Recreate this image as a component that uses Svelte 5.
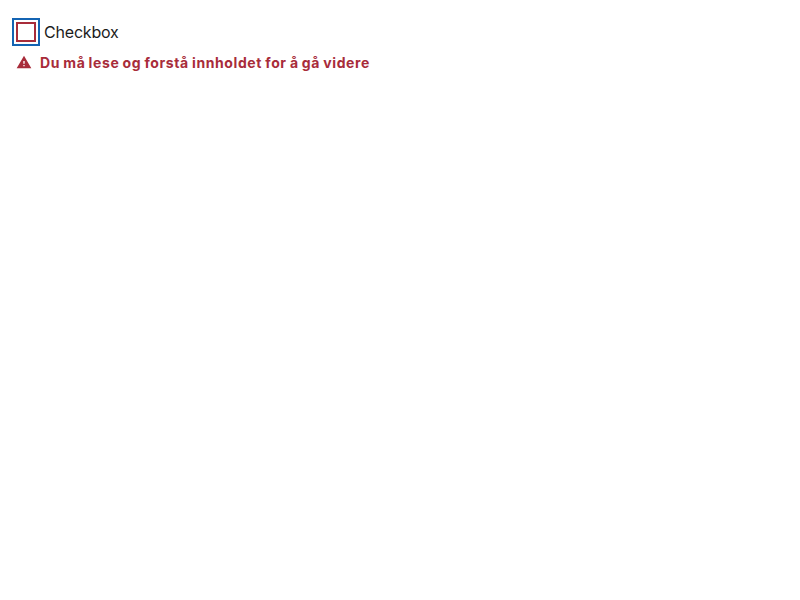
<script>
  let checked = $state(false);
</script>

<div class="field">
  <label class="row">
    <input type="checkbox" bind:checked />
    <span class="box"></span>
    <span class="text">Checkbox</span>
  </label>
  <div class="error">
    <svg viewBox="0 0 24 24" width="16" height="16" aria-hidden="true">
      <path fill="currentColor" fill-rule="evenodd" d="M1 21.5h22L12 2.5 1 21.5Zm12-3h-2v-2h2v2Zm0-4h-2v-4h2v4Z" />
    </svg>
    <span>Du må lese og forstå innholdet for å gå videre</span>
  </div>
</div>

<style>
  :global(body) {
    background: #fff;
  }
  .field {
    padding: 20px 16px;
    font-family: Inter, "Liberation Sans", sans-serif;
  }
  .row {
    display: flex;
    align-items: center;
    gap: 8px;
    width: max-content;
    height: 24px;
  }
  input {
    position: absolute;
    opacity: 0;
    margin: 0;
  }
  .box {
    box-sizing: border-box;
    width: 20px;
    height: 20px;
    border: 2px solid #a82c3a;
    outline: 2px solid #1464b3;
    outline-offset: 2px;
  }
  .text {
    color: #1c1c1c;
    font-size: 16px;
    letter-spacing: -0.2px;
    line-height: 24px;
  }
  .error {
    display: flex;
    align-items: flex-start;
    gap: 8px;
    margin-top: 8px;
    color: #a82c3a;
    font-size: 14px;
    font-weight: 700;
    letter-spacing: 0.6px;
    word-spacing: -0.67px;
    line-height: 21px;
  }
  svg {
    display: block;
    margin-top: 2px;
  }
</style>
